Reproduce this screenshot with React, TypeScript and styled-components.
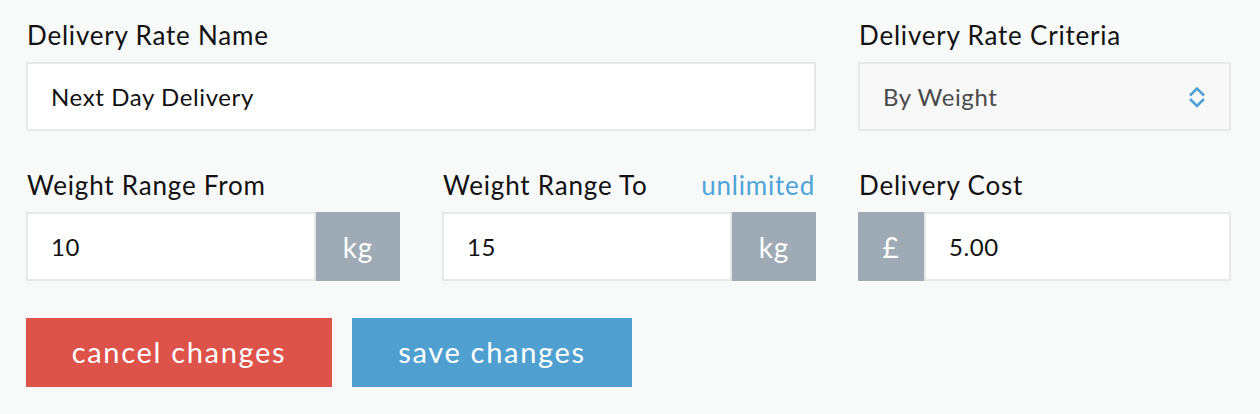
import React from "react";
import styled, { createGlobalStyle } from "styled-components";

const Global = createGlobalStyle`
  html, body { margin: 0; padding: 0; background: #f8f9f9; }
  body { font-family: "Lato", "Open Sans", sans-serif; -webkit-font-smoothing: antialiased; }
  * { box-sizing: border-box; }
`;

const Page = styled.div`
  width: 1260px;
  height: 414px;
  padding: 20px 29px 0 26px;
  background: #f8f9f9;
`;

const Grid = styled.div`
  display: grid;
  grid-template-columns: 374px 374px 373px;
  column-gap: 42px;
  row-gap: 39px;
`;

const Field = styled.div<{ $span?: number }>`
  display: flex;
  flex-direction: column;
  grid-column: span ${(p) => p.$span ?? 1};
`;

const LabelRow = styled.div`
  display: flex;
  align-items: baseline;
  justify-content: space-between;
  height: 30px;
  margin-bottom: 12px;
  padding-left: 1px;
`;

const Label = styled.label`
  font-size: 26px;
  line-height: 30px;
  letter-spacing: 0.8px;
  color: #111;
`;

const LinkText = styled.a`
  font-size: 26px;
  line-height: 30px;
  letter-spacing: 0.8px;
  color: #4fa3d8;
  margin-right: 1px;
`;

const TextBox = styled.div<{ $muted?: boolean }>`
  flex: 1 0 auto;
  height: 69px;
  display: flex;
  align-items: center;
  padding-left: 23px;
  border: 2px solid #e7e8e8;
  background: ${(p) => (p.$muted ? "#f8f8f8" : "#fff")};
  font-size: 24px;
  letter-spacing: 0.6px;
  color: ${(p) => (p.$muted ? "#4a4a4a" : "#111")};
`;

const Group = styled.div`
  display: flex;
  height: 69px;
`;

const Addon = styled.div<{ $w: number }>`
  width: ${(p) => p.$w}px;
  flex: none;
  display: flex;
  align-items: center;
  justify-content: center;
  background: #9eaab6;
  color: #fff;
  font-size: 28px;
  letter-spacing: 0.8px;
`;

const SelectBox = styled(TextBox)`
  justify-content: space-between;
  padding-right: 23px;
`;

const Actions = styled.div`
  display: flex;
  gap: 20px;
  margin-top: 37px;
`;

const Button = styled.button<{ $bg: string; $w: number }>`
  width: ${(p) => p.$w}px;
  height: 69px;
  border: none;
  background: ${(p) => p.$bg};
  color: #fff;
  font-family: inherit;
  font-size: 29px;
  font-weight: 400;
  letter-spacing: 1.7px;
  padding: 0 0 3px;
  cursor: pointer;
`;

const Chevrons = () => (
  <svg width="18" height="24" viewBox="0 0 18 24" fill="none">
    <path d="M2 10.5 L9 3.5 L16 10.5" stroke="#4fa0d3" strokeWidth="2.6" />
    <path d="M2 14 L9 21 L16 14" stroke="#4fa0d3" strokeWidth="2.6" />
  </svg>
);

export default function App() {
  return (
    <>
      <Global />
      <Page>
        <Grid>
          <Field $span={2}>
            <LabelRow>
              <Label>Delivery Rate Name</Label>
            </LabelRow>
            <TextBox>Next Day Delivery</TextBox>
          </Field>
          <Field>
            <LabelRow>
              <Label>Delivery Rate Criteria</Label>
            </LabelRow>
            <SelectBox $muted>
              <span>By Weight</span>
              <Chevrons />
            </SelectBox>
          </Field>
          <Field>
            <LabelRow>
              <Label>Weight Range From</Label>
            </LabelRow>
            <Group>
              <TextBox>10</TextBox>
              <Addon $w={84}>kg</Addon>
            </Group>
          </Field>
          <Field>
            <LabelRow>
              <Label>Weight Range To</Label>
              <LinkText>unlimited</LinkText>
            </LabelRow>
            <Group>
              <TextBox>15</TextBox>
              <Addon $w={84}>kg</Addon>
            </Group>
          </Field>
          <Field>
            <LabelRow>
              <Label>Delivery Cost</Label>
            </LabelRow>
            <Group>
              <Addon $w={66}>£</Addon>
              <TextBox>5.00</TextBox>
            </Group>
          </Field>
        </Grid>
        <Actions>
          <Button $bg="#dd5249" $w={306}>cancel changes</Button>
          <Button $bg="#4f9fd1" $w={280}>save changes</Button>
        </Actions>
      </Page>
    </>
  );
}
